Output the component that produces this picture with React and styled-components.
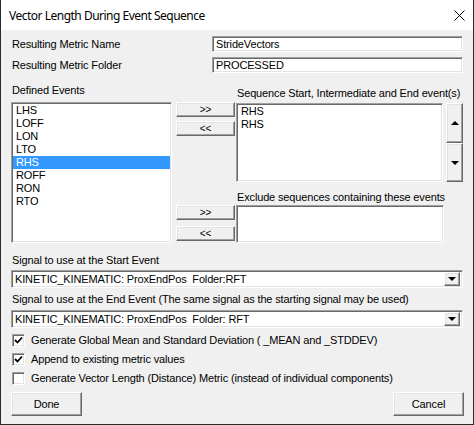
import React from "react";
import styled, { createGlobalStyle, css } from "styled-components";

const GlobalStyle = createGlobalStyle`
  html, body {
    margin: 0;
    padding: 0;
    background: #ffffff;
  }
`;

const sunken = css`
  box-sizing: border-box;
  background: #ffffff;
  border: 1px solid;
  border-color: #a0a0a0 #ffffff #ffffff #a0a0a0;
  box-shadow: inset 1px 1px 0 #696969, inset -1px -1px 0 #e3e3e3;
`;

const raised = css`
  box-sizing: border-box;
  background: #f0f0f0;
  border: 1px solid;
  border-color: #ffffff #696969 #696969 #ffffff;
  box-shadow: inset -1px -1px 0 #a0a0a0, inset 1px 1px 0 #e3e3e3;
`;

const Window = styled.div`
  width: 474px;
  height: 425px;
  box-sizing: border-box;
  border: 1px solid #2b2b2b;
  border-top: none;
  display: flex;
  flex-direction: column;
  font-family: "Liberation Sans", Arial, sans-serif;
  font-size: 11px;
  letter-spacing: -0.15px;
  line-height: 13px;
  color: #000;
`;

const TitleBar = styled.div`
  height: 30px;
  flex: none;
  background: #ffffff;
  display: flex;
  align-items: center;
  justify-content: space-between;
  padding: 0 8px 0 8px;
`;

const Title = styled.span`
  font-family: "Noto Sans", "Liberation Sans", sans-serif;
  font-size: 12px;
  letter-spacing: -0.5px;
`;

const Body = styled.div`
  flex: 1;
  background: #f0f0f0;
  padding: 6px 10px 0 10px;
  display: flex;
  flex-direction: column;
`;

const NameGrid = styled.div`
  display: grid;
  grid-template-columns: 201px 251px;
  grid-auto-rows: 16px;
  row-gap: 5px;
  align-items: center;
`;

const Label = styled.div`
  height: 13px;
  padding-left: 1px;
  margin-top: ${(p) => p.$mt || 0}px;
  white-space: nowrap;
`;

const TextBox = styled.div`
  ${sunken};
  height: 16px;
  padding: 1px 0 0 3px;
  line-height: 13px;
`;

const Middle = styled.div`
  display: flex;
  height: 170px;
`;

const LeftColumn = styled.div`
  width: 161px;
  display: flex;
  flex-direction: column;
`;

const ListBox = styled.div`
  ${sunken};
  width: ${(p) => p.$w || "100%"};
  height: ${(p) => p.$h}px;
  margin-top: ${(p) => p.$mt || 0}px;
  padding: 1px 1px;
`;

const ListItem = styled.div`
  height: 13px;
  padding-left: 3px;
  background: ${(p) => (p.$selected ? "#3399ff" : "transparent")};
  color: ${(p) => (p.$selected ? "#ffffff" : "#000000")};
`;

const MoveColumn = styled.div`
  width: 59px;
  margin: 0 1px 0 4px;
  display: flex;
  flex-direction: column;
`;

const MoveButton = styled.div`
  ${raised};
  height: 15px;
  margin-top: ${(p) => p.$mt}px;
  display: flex;
  align-items: center;
  justify-content: center;
  font-size: 10px;
  letter-spacing: 0;
`;

const RightColumn = styled.div`
  flex: 1;
  display: flex;
  flex-direction: column;
`;

const SeqRow = styled.div`
  display: flex;
  gap: 3px;
  margin-top: 3px;
`;

const ScrollPair = styled.div`
  width: 17px;
  display: flex;
  flex-direction: column;
`;

const ScrollButton = styled.div`
  ${raised};
  height: ${(p) => p.$h}px;
  display: flex;
  align-items: center;
  justify-content: center;
`;

const Arrow = styled.span`
  width: 0;
  height: 0;
  border-left: 4px solid transparent;
  border-right: 4px solid transparent;
  ${(p) =>
    p.$up ? "border-bottom: 4px solid #000;" : "border-top: 4px solid #000;"}
`;

const ComboBox = styled.div`
  ${sunken};
  height: 18px;
  margin-top: ${(p) => p.$mt}px;
  display: flex;
  align-items: center;
  padding: 2px 2px 2px 3px;
`;

const ComboText = styled.span`
  flex: 1;
  white-space: pre;
`;

const DropButton = styled.div`
  ${raised};
  width: 16px;
  height: 14px;
  display: flex;
  align-items: center;
  justify-content: center;
`;

const Checks = styled.div`
  margin-top: 3px;
  display: flex;
  flex-direction: column;
`;

const CheckRow = styled.div`
  height: ${(p) => p.$h}px;
  display: flex;
  align-items: center;
  gap: 6px;
  padding-left: 1px;
`;

const CheckBox = styled.span`
  ${sunken};
  width: 13px;
  height: 13px;
  display: flex;
  align-items: center;
  justify-content: center;
`;

const Footer = styled.div`
  margin-top: 5px;
  display: flex;
  justify-content: space-between;
`;

const PushButton = styled.div`
  ${raised};
  width: 71px;
  height: 24px;
  display: flex;
  align-items: center;
  justify-content: center;
  margin-right: ${(p) => p.$mr || 0}px;
`;

const events = ["LHS", "LOFF", "LON", "LTO", "RHS", "ROFF", "RON", "RTO"];
const sequence = ["RHS", "RHS"];

const Check = () => (
  <svg width="9" height="9" viewBox="0 0 9 9">
    <polyline
      points="1,4 3.5,6.5 8,1.5"
      fill="none"
      stroke="#000"
      strokeWidth="1.8"
    />
  </svg>
);

const App = () => {
  return (
    <>
      <GlobalStyle />
      <Window>
        <TitleBar>
          <Title>Vector Length During Event Sequence</Title>
          <svg width="11" height="11" viewBox="0 0 11 11">
            <path d="M0.5 0.5 L10.5 10.5 M10.5 0.5 L0.5 10.5" stroke="#000" strokeWidth="1" />
          </svg>
        </TitleBar>
        <Body>
          <NameGrid>
            <Label>Resulting Metric Name</Label>
            <TextBox>StrideVectors</TextBox>
            <Label>Resulting Metric Folder</Label>
            <TextBox>PROCESSED</TextBox>
          </NameGrid>

          <Middle>
            <LeftColumn>
              <Label $mt={11}>Defined Events</Label>
              <ListBox $h={141} $mt={5}>
                {events.map((e) => (
                  <ListItem key={e} $selected={e === "RHS"}>
                    {e}
                  </ListItem>
                ))}
              </ListBox>
            </LeftColumn>

            <MoveColumn>
              <MoveButton $mt={29}>&gt;&gt;</MoveButton>
              <MoveButton $mt={4}>&lt;&lt;</MoveButton>
              <MoveButton $mt={69}>&gt;&gt;</MoveButton>
              <MoveButton $mt={6}>&lt;&lt;</MoveButton>
            </MoveColumn>

            <RightColumn>
              <Label $mt={14}>Sequence Start, Intermediate and End event(s)</Label>
              <SeqRow>
                <ListBox $w="207px" $h={79}>
                  {sequence.map((e, i) => (
                    <ListItem key={i}>{e}</ListItem>
                  ))}
                </ListBox>
                <ScrollPair>
                  <ScrollButton $h={40}>
                    <Arrow $up />
                  </ScrollButton>
                  <ScrollButton $h={39}>
                    <Arrow />
                  </ScrollButton>
                </ScrollPair>
              </SeqRow>
              <Label $mt={9}>Exclude sequences containing these events</Label>
              <ListBox $w="208px" $h={38} $mt={1} />
            </RightColumn>
          </Middle>

          <Label $mt={11}>Signal to use at the Start Event</Label>
          <ComboBox $mt={3}>
            <ComboText>KINETIC_KINEMATIC: ProxEndPos  Folder:RFT</ComboText>
            <DropButton>
              <Arrow />
            </DropButton>
          </ComboBox>
          <Label $mt={5}>
            Signal to use at the End Event (The same signal as the starting signal may be used)
          </Label>
          <ComboBox $mt={4}>
            <ComboText>KINETIC_KINEMATIC: ProxEndPos  Folder: RFT</ComboText>
            <DropButton>
              <Arrow />
            </DropButton>
          </ComboBox>

          <Checks>
            <CheckRow $h={19}>
              <CheckBox>
                <Check />
              </CheckBox>
              Generate Global Mean and Standard Deviation ( _MEAN and _STDDEV)
            </CheckRow>
            <CheckRow $h={19}>
              <CheckBox>
                <Check />
              </CheckBox>
              Append to existing metric values
            </CheckRow>
            <CheckRow $h={18}>
              <CheckBox />
              Generate Vector Length (Distance) Metric (instead of individual components)
            </CheckRow>
          </Checks>

          <Footer>
            <PushButton>Done</PushButton>
            <PushButton $mr={-1}>Cancel</PushButton>
          </Footer>
        </Body>
      </Window>
    </>
  );
};

export default App;
